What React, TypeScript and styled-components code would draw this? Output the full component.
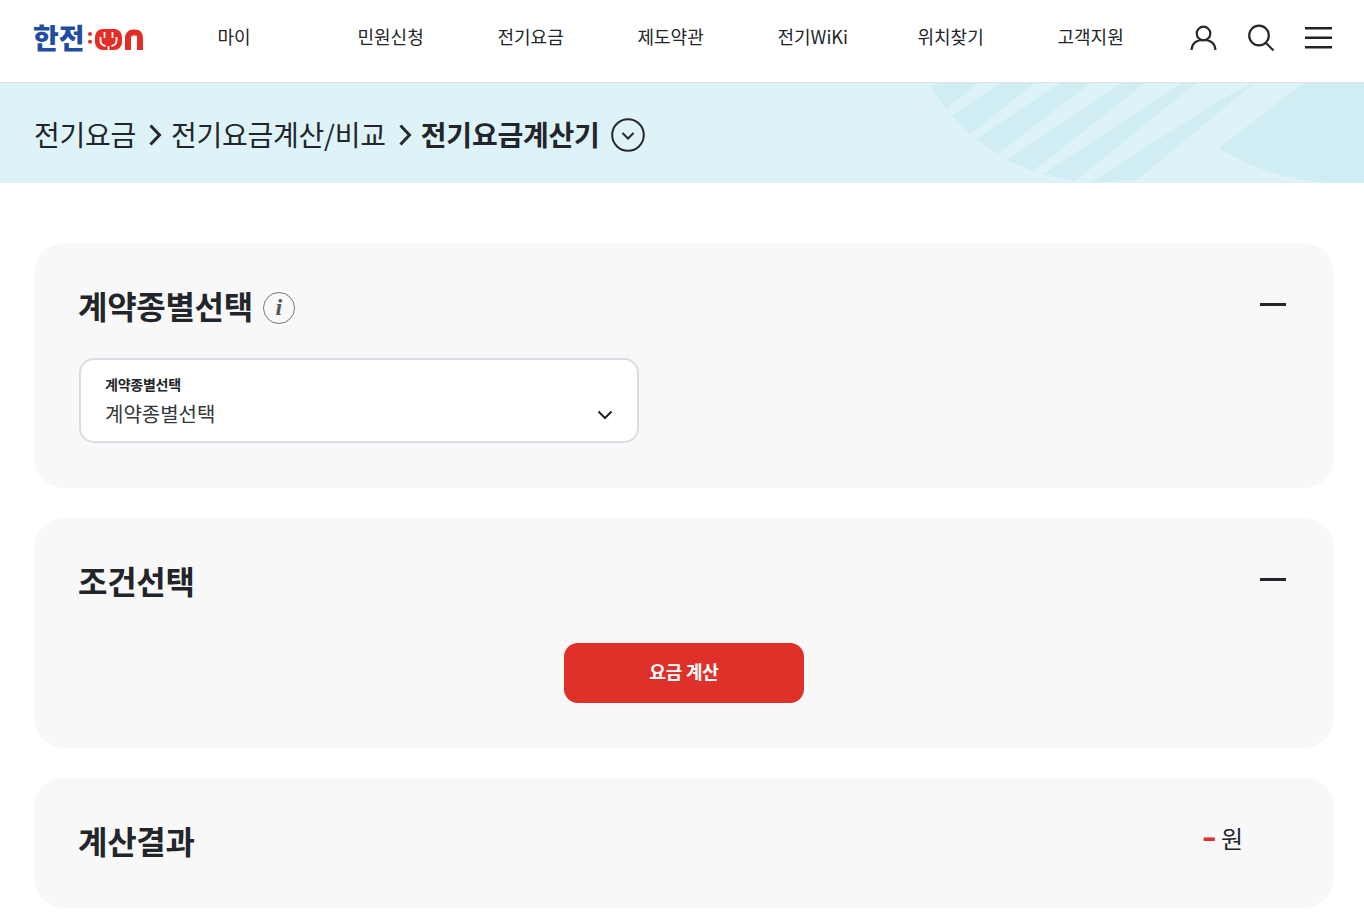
import React from 'react'
import styled, { createGlobalStyle } from 'styled-components'

const GlobalStyle = createGlobalStyle`
  * { box-sizing: border-box; }
  html, body { margin: 0; padding: 0; background: #fff; overflow: hidden; }
  body {
    font-family: 'Noto Sans CJK KR', 'Noto Sans', sans-serif;
    color: #222529;
  }
`

const NAV_ITEMS = ['마이', '민원신청', '전기요금', '제도약관', '전기WiKi', '위치찾기', '고객지원']

const App = () => (
  <>
    <GlobalStyle />
    <Header>
      <LogoLink href="#">
        <LogoText>한전</LogoText>
        <LogoMark width="56" height="24" viewBox="0 0 56 24">
          <circle cx="2" cy="8" r="2" fill="#e32d27" />
          <circle cx="2" cy="15.700" r="2" fill="#e32d27" />
          <path
            fill="#e32d27"
            d="M7 12C7 6 10.500 3 15 3h11c4.500 0 8 3 8 9v3.500C34 21 30.500 24 26 24H15c-4.500 0-8-3-8-8.500z"
          />
          <path
            d="M16.500 6v6M24.500 6v6M12.500 11v3.500c0 3 2.500 5 5 5.500M28.500 11v3.500c0 3-2.500 5-5 5.500M20.500 20v4"
            fill="none"
            stroke="#fff"
            strokeWidth="1.800"
          />
          <path
            d="M40 24V12C40 8.500 42 6.500 45 6.500h2c4 0 5 2 5 5.500v12"
            fill="none"
            stroke="#e32d27"
            strokeWidth="6"
          />
        </LogoMark>
      </LogoLink>
      <Nav>
        {NAV_ITEMS.map((item) => (
          <NavItem key={item} href="#">
            {item}
          </NavItem>
        ))}
      </Nav>
      <HeaderIcons>
        <IconButton aria-label="마이페이지">
          <svg width="28" height="28" viewBox="0 0 28 28" fill="none" stroke="#26282c" strokeWidth="2.200">
            <circle cx="14.500" cy="9.500" r="6.800" />
            <path d="M2.500 26c.5-6.500 5-10 12-10s11.500 3.500 12 10" />
          </svg>
        </IconButton>
        <IconButton aria-label="검색">
          <svg width="28" height="28" viewBox="0 0 28 28" fill="none" stroke="#26282c" strokeWidth="2.200">
            <circle cx="12" cy="11.500" r="9.800" />
            <path d="M18.500 18.500l8 8" />
          </svg>
        </IconButton>
        <IconButton aria-label="메뉴">
          <svg width="28" height="22" viewBox="0 0 28 22" fill="#222">
            <rect x="0" y="0" width="27" height="2.500" />
            <rect x="0" y="9.500" width="27" height="2.500" />
            <rect x="0" y="19" width="27" height="2.500" />
          </svg>
        </IconButton>
      </HeaderIcons>
    </Header>

    <Banner>
      <BannerArt width="464" height="100" viewBox="0 0 464 100">
        <g fill="#d0edf3">
          <path d="M31 5L38 0H78L46 26z" />
          <path d="M52 33L100 0H135L70 51z" />
          <path d="M76 56L160 0H190L98 71z" />
          <path d="M107 77L222 0H245L133 88z" />
          <path d="M143 91L282 0H296L175 98z" />
          <path d="M190 100L320 17L354 0L237 97z" />
          <path d="M319 65L403 0H464V100H432C390 97 355 88 319 65z" />
        </g>
      </BannerArt>
      <Crumbs>
        <Crumb>전기요금</Crumb>
        <CrumbArrow width="14" height="24" viewBox="0 0 14 24">
          <path d="M2.500 2.500l9 9.500-9 9.500" fill="none" stroke="#26282c" strokeWidth="3" />
        </CrumbArrow>
        <Crumb>전기요금계산/비교</Crumb>
        <CrumbArrow width="14" height="24" viewBox="0 0 14 24">
          <path d="M2.500 2.500l9 9.500-9 9.500" fill="none" stroke="#26282c" strokeWidth="3" />
        </CrumbArrow>
        <Crumb $current>전기요금계산기</Crumb>
        <CrumbToggle width="34" height="34" viewBox="0 0 34 34" fill="none" stroke="#26282c">
          <circle cx="17" cy="17" r="15.800" strokeWidth="2" />
          <path d="M11.500 15l5.500 5.500 5.500-5.500" strokeWidth="2" />
        </CrumbToggle>
      </Crumbs>
    </Banner>

    <Main>
      <Card $height={245}>
        <CardHead>
          <CardTitle>계약종별선택</CardTitle>
          <InfoBadge>i</InfoBadge>
          <Collapse />
        </CardHead>
        <SelectBox>
          <SelectLabel>계약종별선택</SelectLabel>
          <SelectValue>계약종별선택</SelectValue>
          <SelectChevron width="16" height="10" viewBox="0 0 16 10">
            <path d="M1.500 1.500L8 8l6.500-6.500" fill="none" stroke="#222" strokeWidth="2" />
          </SelectChevron>
        </SelectBox>
      </Card>
      <Card $height={230}>
        <CardHead>
          <CardTitle>조건선택</CardTitle>
          <Collapse />
        </CardHead>
        <ButtonRow>
          <CalcButton type="button">요금 계산</CalcButton>
        </ButtonRow>
      </Card>
      <Card $height={130}>
        <CardHead>
          <CardTitle>계산결과</CardTitle>
          <Result>
            <ResultValue>-</ResultValue>
            <span>원</span>
          </Result>
        </CardHead>
      </Card>
    </Main>
  </>
)

export default App

const Header = styled.header`
  display: flex;
  align-items: flex-start;
  height: 83px;
  border-bottom: 1px solid #e2e3e6;
  background: #fff;
`

const LogoLink = styled.a`
  display: flex;
  align-items: flex-start;
  flex: none;
  width: 217.5px;
  height: 74px;
  padding: 22px 0 0 33px;
  text-decoration: none;
`

const LogoText = styled.span`
  width: 55px;
  color: #1f4ea1;
  font-size: 28px;
  font-weight: 900;
  line-height: 30px;
`

const LogoMark = styled.svg`
  display: block;
  flex: none;
  margin-top: 4px;
`

const Nav = styled.nav`
  display: flex;
  flex: none;
  width: 963.5px;
`

const NavItem = styled.a`
  flex: none;
  width: 140px;
  height: 72px;
  color: #222529;
  font-size: 18px;
  line-height: 72px;
  text-decoration: none;

  &:last-child {
    width: 123.5px;
  }
`

const HeaderIcons = styled.div`
  display: flex;
  align-items: center;
  gap: 30px;
  height: 76px;
  margin-left: 8px;
`

const IconButton = styled.button`
  display: flex;
  padding: 0;
  border: 0;
  background: none;
`

const Banner = styled.section`
  position: relative;
  display: flex;
  align-items: center;
  height: 100px;
  padding: 0 34px;
  overflow: hidden;
  background: #ddf3f8;
`

const BannerArt = styled.svg`
  position: absolute;
  top: 0;
  right: 0;
`

const Crumbs = styled.div`
  position: relative;
  display: flex;
  align-items: center;
  margin-top: 4px;
`

const Crumb = styled.span<{ $current?: boolean }>`
  margin-top: -2px;
  color: #222529;
  font-size: 28px;
  font-weight: ${({ $current }) => ($current ? 700 : 400)};
  line-height: 40px;
  letter-spacing: -0.25px;
`

const CrumbArrow = styled.svg`
  margin: 0 9px 0 12px;
`

const CrumbToggle = styled.svg`
  margin-left: 12px;
`

const Main = styled.main`
  display: flex;
  flex-direction: column;
  gap: 30px;
  padding: 60px 30px 0 34px;
`

const Card = styled.section<{ $height: number }>`
  height: ${({ $height }) => $height}px;
  padding: 40px 48px 0 45px;
  border-radius: 30px;
  background: #f8f8f8;
`

const CardHead = styled.div`
  display: flex;
  align-items: center;
  height: 48px;
`

const CardTitle = styled.h2`
  margin: -4px 0 0 -1px;
  color: #222529;
  font-size: 32px;
  font-weight: 700;
  line-height: 48px;
  letter-spacing: -0.3px;
`

const InfoBadge = styled.span`
  display: flex;
  align-items: center;
  justify-content: center;
  width: 32px;
  height: 32px;
  margin: 1px 0 0 10px;
  border: 1px solid #77797d;
  border-radius: 50%;
  color: #55575b;
  font-family: 'Liberation Serif', serif;
  font-size: 24px;
  font-style: italic;
  font-weight: 700;
`

const Collapse = styled.span`
  width: 26px;
  height: 3px;
  margin: -6px 0 0 auto;
  background: #222529;
`

const SelectBox = styled.div`
  position: relative;
  width: 560px;
  height: 85px;
  margin-top: 27px;
  padding: 14px 24px 0;
  border: 2px solid #d9dbe6;
  border-radius: 15px;
  background: #fff;
`

const SelectLabel = styled.div`
  color: #222529;
  font-size: 14px;
  font-weight: 700;
  line-height: 20px;
  letter-spacing: -0.25px;
`

const SelectValue = styled.div`
  margin-top: 5px;
  color: #35383c;
  font-size: 20px;
  line-height: 30px;
`

const SelectChevron = styled.svg`
  position: absolute;
  top: 50px;
  right: 24px;
`

const ButtonRow = styled.div`
  display: flex;
  justify-content: center;
  margin: 37px 0 0 3px;
`

const CalcButton = styled.button`
  width: 240px;
  height: 60px;
  padding: 0 0 5px;
  border: 0;
  border-radius: 14px;
  background: #e0302a;
  color: #fff;
  font-family: inherit;
  font-size: 18px;
  font-weight: 700;
  letter-spacing: -0.2px;
`

const Result = styled.div`
  display: flex;
  align-items: center;
  gap: 5px;
  margin: -10px 43px 0 auto;
  color: #222529;
  font-size: 24px;
`

const ResultValue = styled.span`
  color: #e0302a;
  font-weight: 700;
  transform: translate(1px, -3px) scale(1.7, 1.4);
  transform-origin: right center;
`
